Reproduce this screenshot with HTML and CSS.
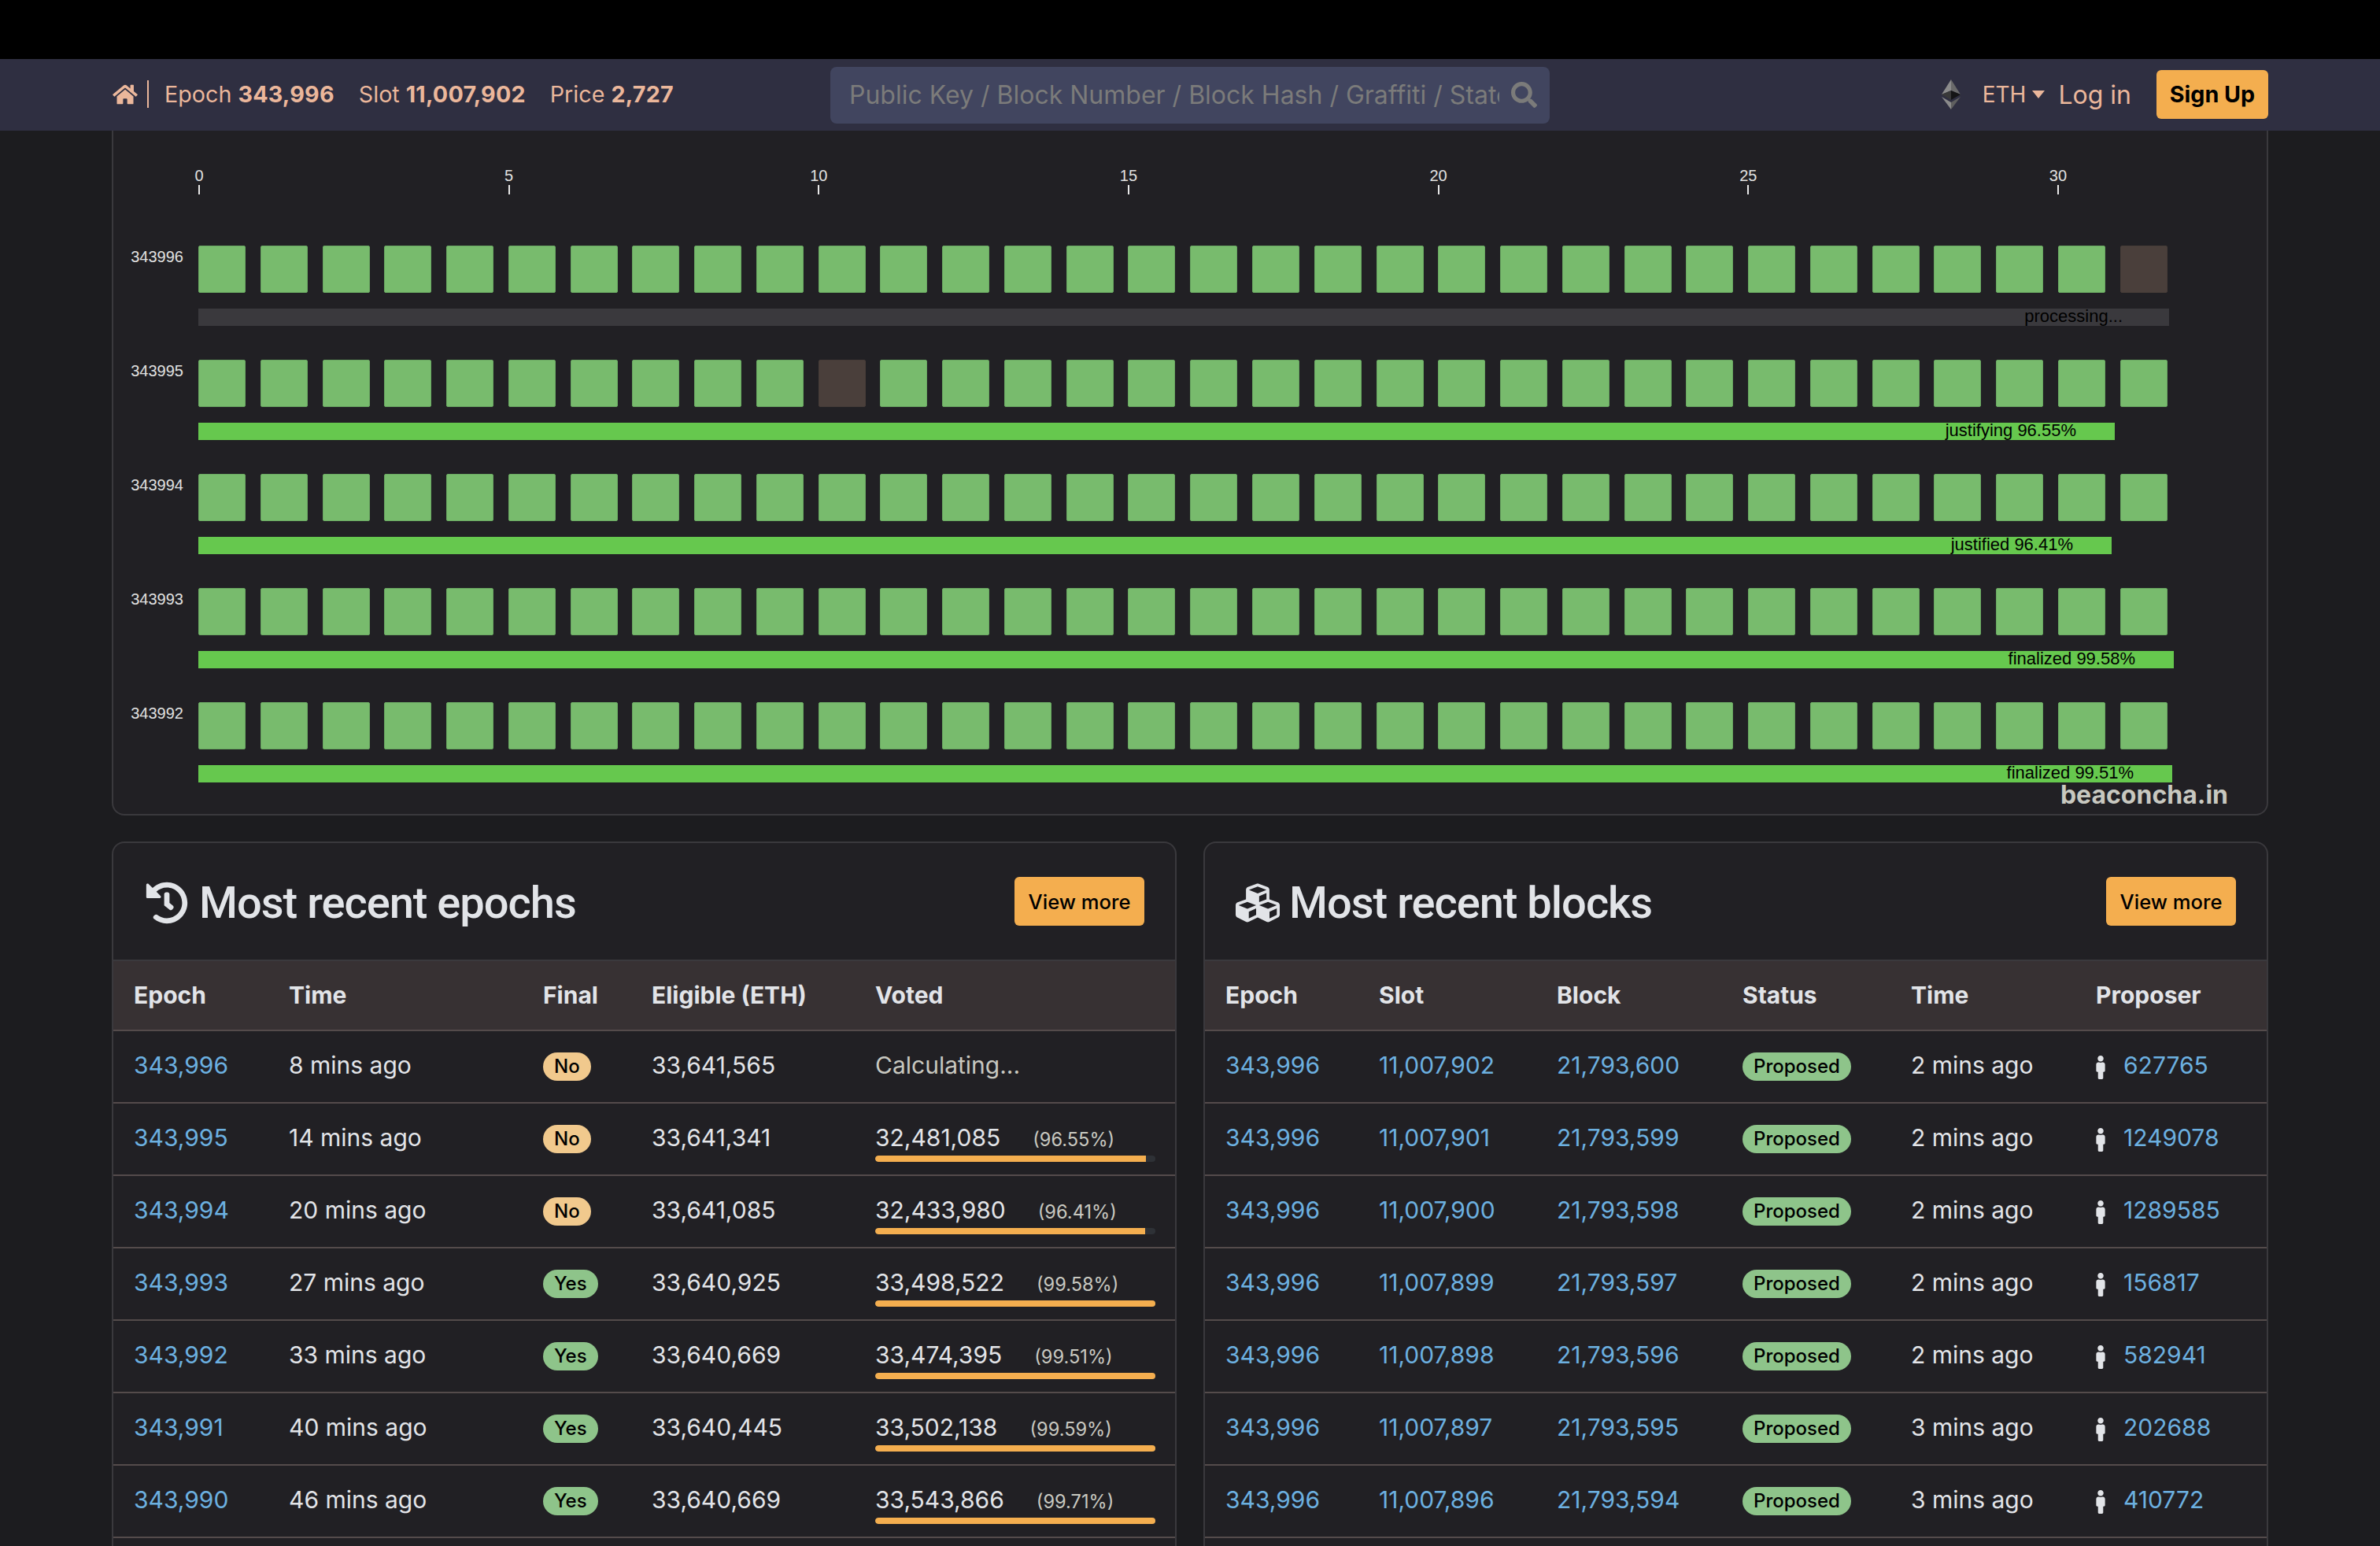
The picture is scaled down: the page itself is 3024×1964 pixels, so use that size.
FILE: index.html
```html
<!DOCTYPE html>
<html lang="en">
<head>
    <meta charset="UTF-8">
    <meta name="viewport" content="width=device-width, initial-scale=1.0">
    <title>Beacon Chain Explorer</title>
    <link rel="stylesheet" href="styles.css">
</head>
<body>

<svg class="defs" width="0" height="0">
    <symbol id="i-male" viewBox="0 0 192 512"><path d="M96 0c35.346 0 64 28.654 64 64s-28.654 64-64 64-64-28.654-64-64S60.654 0 96 0m48 144h-11.36c-22.711 10.443-49.59 10.894-73.28 0H48c-26.51 0-48 21.49-48 48v136c0 13.255 10.745 24 24 24h16v136c0 13.255 10.745 24 24 24h64c13.255 0 24-10.745 24-24V352h16c13.255 0 24-10.745 24-24V192c0-26.51-21.49-48-48-48z"/></symbol>
</svg>

<div class="topband"></div>

<nav class="navbar">
    <div class="nav-left">
        <svg class="home-icon" viewBox="0 0 576 512"><path d="M280.37 148.26L96 300.11V464a16 16 0 0 0 16 16l112.06-.29a16 16 0 0 0 15.92-16V368a16 16 0 0 1 16-16h64a16 16 0 0 1 16 16v95.64a16 16 0 0 0 16 16.05L464 480a16 16 0 0 0 16-16V300L295.67 148.26a12.19 12.19 0 0 0-15.3 0zM571.6 251.47L488 182.56V44.05a12 12 0 0 0-12-12h-56a12 12 0 0 0-12 12v72.61L318.47 43a48 48 0 0 0-61 0L4.34 251.47a12 12 0 0 0-1.6 16.9l25.5 31A12 12 0 0 0 45.15 301l235.22-193.74a12.19 12.19 0 0 1 15.3 0L530.9 301a12 12 0 0 0 16.9-1.6l25.5-31a12 12 0 0 0-1.7-16.93z"/></svg>
        <span class="nav-divider"></span>
        <span class="nav-stat">Epoch <b>343,996</b></span>
        <span class="nav-stat">Slot <b>11,007,902</b></span>
        <span class="nav-stat">Price <b>2,727</b></span>
    </div>
    <form class="search">
        <input class="search-input" type="text" placeholder="Public Key / Block Number / Block Hash / Graffiti / State Root">
        <svg class="search-icon" viewBox="0 0 512 512"><path d="M505 442.7L405.3 343c-4.5-4.5-10.6-7-17-7H372c27.6-35.3 44-79.7 44-128C416 93.1 322.9 0 208 0S0 93.1 0 208s93.1 208 208 208c48.3 0 92.7-16.4 128-44v16.3c0 6.4 2.5 12.5 7 17l99.7 99.7c9.4 9.4 24.6 9.4 33.9 0l28.3-28.3c9.4-9.4 9.4-24.6.1-34zM208 336c-70.7 0-128-57.2-128-128 0-70.7 57.2-128 128-128 70.7 0 128 57.2 128 128 0 70.7-57.2 128-128 128z"/></svg>
    </form>
    <div class="nav-right">
        <svg class="eth-logo" viewBox="0 0 24 38">
            <polygon fill="#8b8b8b" points="12,0 0,19 12,14"/>
            <polygon fill="#6a6a6a" points="12,0 24,19 12,14"/>
            <polygon fill="#393939" points="0,19 12,14 12,26"/>
            <polygon fill="#151515" points="24,19 12,14 12,26"/>
            <polygon fill="#8b8b8b" points="0,22 12,29 12,38"/>
            <polygon fill="#5f5f5f" points="24,22 12,29 12,38"/>
        </svg>
        <span class="currency">ETH<i class="caret"></i></span>
        <a class="login">Log in</a>
        <a class="signup">Sign Up</a>
    </div>
</nav>

<main class="container">

    <section class="card chart-card">
        <div class="ticks">
            <div class="tick"><span>0</span><i></i></div>
            <div class="tick"><span>5</span><i></i></div>
            <div class="tick"><span>10</span><i></i></div>
            <div class="tick"><span>15</span><i></i></div>
            <div class="tick"><span>20</span><i></i></div>
            <div class="tick"><span>25</span><i></i></div>
            <div class="tick"><span>30</span><i></i></div>
        </div>

        <div class="epoch">
            <div class="epoch-label">343996</div>
            <div class="epoch-body">
                <div class="slots">
                    <i class="s"></i><i class="s"></i><i class="s"></i><i class="s"></i><i class="s"></i><i class="s"></i><i class="s"></i><i class="s"></i>
                    <i class="s"></i><i class="s"></i><i class="s"></i><i class="s"></i><i class="s"></i><i class="s"></i><i class="s"></i><i class="s"></i>
                    <i class="s"></i><i class="s"></i><i class="s"></i><i class="s"></i><i class="s"></i><i class="s"></i><i class="s"></i><i class="s"></i>
                    <i class="s"></i><i class="s"></i><i class="s"></i><i class="s"></i><i class="s"></i><i class="s"></i><i class="s"></i><i class="s miss"></i>
                </div>
                <div class="vote-strip processing" style="width: 2504px">processing...</div>
            </div>
        </div>

        <div class="epoch">
            <div class="epoch-label">343995</div>
            <div class="epoch-body">
                <div class="slots">
                    <i class="s"></i><i class="s"></i><i class="s"></i><i class="s"></i><i class="s"></i><i class="s"></i><i class="s"></i><i class="s"></i>
                    <i class="s"></i><i class="s"></i><i class="s miss"></i><i class="s"></i><i class="s"></i><i class="s"></i><i class="s"></i><i class="s"></i>
                    <i class="s"></i><i class="s"></i><i class="s"></i><i class="s"></i><i class="s"></i><i class="s"></i><i class="s"></i><i class="s"></i>
                    <i class="s"></i><i class="s"></i><i class="s"></i><i class="s"></i><i class="s"></i><i class="s"></i><i class="s"></i><i class="s"></i>
                </div>
                <div class="vote-strip" style="width: 2435px">justifying 96.55%</div>
            </div>
        </div>

        <div class="epoch">
            <div class="epoch-label">343994</div>
            <div class="epoch-body">
                <div class="slots">
                    <i class="s"></i><i class="s"></i><i class="s"></i><i class="s"></i><i class="s"></i><i class="s"></i><i class="s"></i><i class="s"></i>
                    <i class="s"></i><i class="s"></i><i class="s"></i><i class="s"></i><i class="s"></i><i class="s"></i><i class="s"></i><i class="s"></i>
                    <i class="s"></i><i class="s"></i><i class="s"></i><i class="s"></i><i class="s"></i><i class="s"></i><i class="s"></i><i class="s"></i>
                    <i class="s"></i><i class="s"></i><i class="s"></i><i class="s"></i><i class="s"></i><i class="s"></i><i class="s"></i><i class="s"></i>
                </div>
                <div class="vote-strip" style="width: 2431px">justified 96.41%</div>
            </div>
        </div>

        <div class="epoch">
            <div class="epoch-label">343993</div>
            <div class="epoch-body">
                <div class="slots">
                    <i class="s"></i><i class="s"></i><i class="s"></i><i class="s"></i><i class="s"></i><i class="s"></i><i class="s"></i><i class="s"></i>
                    <i class="s"></i><i class="s"></i><i class="s"></i><i class="s"></i><i class="s"></i><i class="s"></i><i class="s"></i><i class="s"></i>
                    <i class="s"></i><i class="s"></i><i class="s"></i><i class="s"></i><i class="s"></i><i class="s"></i><i class="s"></i><i class="s"></i>
                    <i class="s"></i><i class="s"></i><i class="s"></i><i class="s"></i><i class="s"></i><i class="s"></i><i class="s"></i><i class="s"></i>
                </div>
                <div class="vote-strip" style="width: 2510px">finalized 99.58%</div>
            </div>
        </div>

        <div class="epoch">
            <div class="epoch-label">343992</div>
            <div class="epoch-body">
                <div class="slots">
                    <i class="s"></i><i class="s"></i><i class="s"></i><i class="s"></i><i class="s"></i><i class="s"></i><i class="s"></i><i class="s"></i>
                    <i class="s"></i><i class="s"></i><i class="s"></i><i class="s"></i><i class="s"></i><i class="s"></i><i class="s"></i><i class="s"></i>
                    <i class="s"></i><i class="s"></i><i class="s"></i><i class="s"></i><i class="s"></i><i class="s"></i><i class="s"></i><i class="s"></i>
                    <i class="s"></i><i class="s"></i><i class="s"></i><i class="s"></i><i class="s"></i><i class="s"></i><i class="s"></i><i class="s"></i>
                </div>
                <div class="vote-strip" style="width: 2508px">finalized 99.51%</div>
            </div>
        </div>

        <div class="watermark">beaconcha.in</div>
    </section>

    <div class="tables">

        <section class="card">
            <header class="card-head">
                <h2 class="card-title">
                    <svg class="title-icon" viewBox="0 0 512 512"><path d="M504 255.531c.253 136.64-111.18 248.372-247.82 248.468-59.015.042-113.223-20.53-155.822-54.911-11.077-8.94-11.905-25.541-1.839-35.607l11.267-11.267c8.609-8.609 22.353-9.551 31.891-1.984C173.062 425.135 212.781 440 256 440c101.705 0 184-82.311 184-184 0-101.705-82.311-184-184-184-48.814 0-93.149 18.969-126.068 49.932l50.754 50.754c10.08 10.08 2.941 27.314-11.313 27.314H24c-8.837 0-16-7.163-16-16V38.627c0-14.254 17.234-21.393 27.314-11.314l49.372 49.372C129.209 34.136 189.552 8 256 8c136.81 0 247.747 110.78 248 247.531zm-180.912 78.784l9.823-12.63c8.138-10.463 6.253-25.542-4.21-33.679L288 256.349V152c0-13.255-10.745-24-24-24h-16c-13.255 0-24 10.745-24 24v135.651l65.409 50.874c10.463 8.137 25.541 6.253 33.679-4.21z"/></svg>
                    Most recent epochs
                </h2>
                <a class="btn-more">View more</a>
            </header>
            <table class="data epochs">
                <thead>
                    <tr><th>Epoch</th><th>Time</th><th>Final</th><th>Eligible (ETH)</th><th>Voted</th></tr>
                </thead>
                <tbody>
                    <tr>
                        <td><a>343,996</a></td><td>8 mins ago</td><td><span class="badge no">No</span></td><td>33,641,565</td>
                        <td class="muted">Calculating...</td>
                    </tr>
                    <tr>
                        <td><a>343,995</a></td><td>14 mins ago</td><td><span class="badge no">No</span></td><td>33,641,341</td>
                        <td><div class="voted">32,481,085<small>(96.55%)</small></div><div class="progress"><div style="width: 96.55%"></div></div></td>
                    </tr>
                    <tr>
                        <td><a>343,994</a></td><td>20 mins ago</td><td><span class="badge no">No</span></td><td>33,641,085</td>
                        <td><div class="voted">32,433,980<small>(96.41%)</small></div><div class="progress"><div style="width: 96.41%"></div></div></td>
                    </tr>
                    <tr>
                        <td><a>343,993</a></td><td>27 mins ago</td><td><span class="badge yes">Yes</span></td><td>33,640,925</td>
                        <td><div class="voted">33,498,522<small>(99.58%)</small></div><div class="progress"><div style="width: 100%"></div></div></td>
                    </tr>
                    <tr>
                        <td><a>343,992</a></td><td>33 mins ago</td><td><span class="badge yes">Yes</span></td><td>33,640,669</td>
                        <td><div class="voted">33,474,395<small>(99.51%)</small></div><div class="progress"><div style="width: 100%"></div></div></td>
                    </tr>
                    <tr>
                        <td><a>343,991</a></td><td>40 mins ago</td><td><span class="badge yes">Yes</span></td><td>33,640,445</td>
                        <td><div class="voted">33,502,138<small>(99.59%)</small></div><div class="progress"><div style="width: 100%"></div></div></td>
                    </tr>
                    <tr>
                        <td><a>343,990</a></td><td>46 mins ago</td><td><span class="badge yes">Yes</span></td><td>33,640,669</td>
                        <td><div class="voted">33,543,866<small>(99.71%)</small></div><div class="progress"><div style="width: 100%"></div></div></td>
                    </tr>
                </tbody>
            </table>
        </section>

        <section class="card">
            <header class="card-head">
                <h2 class="card-title">
                    <svg class="title-icon cubes" viewBox="0 0 512 512"><path d="M488.6 250.2L392 214V105.5c0-15-9.3-28.4-23.4-33.7l-100-37.5c-8.1-3.1-17.1-3.1-25.3 0l-100 37.5c-14.1 5.3-23.4 18.7-23.4 33.7V214l-96.6 36.2C9.3 255.5 0 268.9 0 283.9V394c0 13.6 7.7 26.1 19.9 32.2l100 50c10.1 5.1 22.1 5.1 32.2 0l103.9-52 103.9 52c10.1 5.1 22.1 5.1 32.2 0l100-50c12.2-6.1 19.9-18.6 19.9-32.2V283.9c0-15-9.3-28.4-23.4-33.7zM358 214.8l-85 31.9v-68.2l85-37v73.3zM154 104.1l102-38.2 102 38.2v.6l-102 41.4-102-41.4v-.6zm84 291.1l-85 42.5v-79.1l85-38.8v75.4zm0-112l-102 41.4-102-41.4v-.6l102-38.2 102 38.2v.6zm240 112l-85 42.5v-79.1l85-38.8v75.4zm0-112l-102 41.4-102-41.4v-.6l102-38.2 102 38.2v.6z"/></svg>
                    Most recent blocks
                </h2>
                <a class="btn-more">View more</a>
            </header>
            <table class="data blocks">
                <thead>
                    <tr><th>Epoch</th><th>Slot</th><th>Block</th><th>Status</th><th>Time</th><th>Proposer</th></tr>
                </thead>
                <tbody>
                    <tr><td><a>343,996</a></td><td><a>11,007,902</a></td><td><a>21,793,600</a></td><td><span class="badge yes">Proposed</span></td><td>2 mins ago</td><td><svg class="male"><use href="#i-male"/></svg><a>627765</a></td></tr>
                    <tr><td><a>343,996</a></td><td><a>11,007,901</a></td><td><a>21,793,599</a></td><td><span class="badge yes">Proposed</span></td><td>2 mins ago</td><td><svg class="male"><use href="#i-male"/></svg><a>1249078</a></td></tr>
                    <tr><td><a>343,996</a></td><td><a>11,007,900</a></td><td><a>21,793,598</a></td><td><span class="badge yes">Proposed</span></td><td>2 mins ago</td><td><svg class="male"><use href="#i-male"/></svg><a>1289585</a></td></tr>
                    <tr><td><a>343,996</a></td><td><a>11,007,899</a></td><td><a>21,793,597</a></td><td><span class="badge yes">Proposed</span></td><td>2 mins ago</td><td><svg class="male"><use href="#i-male"/></svg><a>156817</a></td></tr>
                    <tr><td><a>343,996</a></td><td><a>11,007,898</a></td><td><a>21,793,596</a></td><td><span class="badge yes">Proposed</span></td><td>2 mins ago</td><td><svg class="male"><use href="#i-male"/></svg><a>582941</a></td></tr>
                    <tr><td><a>343,996</a></td><td><a>11,007,897</a></td><td><a>21,793,595</a></td><td><span class="badge yes">Proposed</span></td><td>3 mins ago</td><td><svg class="male"><use href="#i-male"/></svg><a>202688</a></td></tr>
                    <tr><td><a>343,996</a></td><td><a>11,007,896</a></td><td><a>21,793,594</a></td><td><span class="badge yes">Proposed</span></td><td>3 mins ago</td><td><svg class="male"><use href="#i-male"/></svg><a>410772</a></td></tr>
                </tbody>
            </table>
        </section>

    </div>
</main>

</body>
</html>
```

FILE: styles.css
```css
html, body {
    height: 1964px;
    overflow: hidden;
}

body {
    margin: 0;
    background-color: #1c1c1f;
    color: #e2e4e8;
    font-family: Inter, "Liberation Sans", sans-serif;
    font-size: 30px;
}

.defs {
    position: absolute;
}

.topband {
    height: 75px;
    background-color: #000;
}

/* Navbar */
.navbar {
    display: flex;
    align-items: center;
    height: 91px;
    padding: 0 142px 0 143px;
    background-color: #2f2f41;
    color: #ebb79b;
}

.nav-left {
    display: flex;
    flex-shrink: 0;
    align-items: center;
    width: 912px;
    margin-bottom: 2px;
    font-size: 28.7px;
}

.home-icon {
    width: 32px;
    height: 28px;
    fill: #ebb79b;
}

.nav-divider {
    width: 2px;
    height: 35px;
    margin: 0 20px 0 12px;
    background-color: #ebb79b;
}

.nav-stat {
    margin-right: 31px;
    white-space: nowrap;
}

.nav-stat b {
    font-weight: 700;
    letter-spacing: 0.2px;
}

.search {
    display: flex;
    align-items: center;
    width: 914px;
    height: 72px;
    padding: 0 16px 0 24px;
    box-sizing: border-box;
    border-radius: 8px;
    background-color: #41455f;
}

.search-input {
    flex: 1;
    min-width: 0;
    padding: 0;
    border: 0;
    outline: 0;
    background: transparent;
    color: #e2e4e8;
    font-family: inherit;
    font-size: 32px;
}

.search-input::placeholder {
    color: #7b7b7a;
    opacity: 1;
}

.search-icon {
    width: 33px;
    height: 33px;
    margin-left: 15px;
    fill: #7b7b7a;
}

.nav-right {
    display: flex;
    align-items: center;
    margin-left: auto;
    margin-bottom: 1px;
}

.eth-logo {
    width: 24px;
    height: 38px;
    margin-right: 28px;
}

.currency {
    display: flex;
    align-items: center;
    font-size: 28px;
}

.caret {
    width: 0;
    height: 0;
    margin-left: 8px;
    border-top: 10px solid #ebb79b;
    border-left: 8px solid transparent;
    border-right: 8px solid transparent;
}

.login {
    margin: 0 32px 0 17px;
    font-size: 32px;
}

.signup {
    width: 142px;
    height: 62px;
    border-radius: 6px;
    background-color: #f4ae4f;
    color: #000;
    font-size: 28.7px;
    font-weight: 700;
    line-height: 62px;
    text-align: center;
}

/* Page */
.container {
    width: 2740px;
    margin: 0 auto;
}

.card {
    position: relative;
    border: 2px solid #3a393d;
    border-radius: 16px;
    background-color: #212024;
    overflow: hidden;
}

/* Epoch chart */
.chart-card {
    height: 870px;
    box-sizing: border-box;
    padding: 45px 0 0 108px;
    border-top: 0;
    border-radius: 0 0 16px 16px;
    font-family: "Liberation Sans", sans-serif;
    font-size: 20px;
}

.ticks {
    display: flex;
    justify-content: space-between;
    width: 2364px;
    height: 101px;
}

.tick {
    display: flex;
    flex-direction: column;
    align-items: center;
    width: 2px;
    color: #e0e0e0;
}

.tick span {
    height: 24px;
    line-height: 24px;
}

.tick i {
    width: 2px;
    height: 12px;
    background-color: #e8e8e8;
}

.epoch {
    display: flex;
    margin-bottom: 43px;
}

.epoch-label {
    width: 89px;
    margin-left: -108px;
    padding-top: 3px;
    margin-right: 19px;
    color: #e0e0e0;
    text-align: right;
}

.epoch-body {
    width: 2502px;
}

.slots {
    display: flex;
    justify-content: space-between;
    margin-bottom: 20px;
}

.s {
    width: 60px;
    height: 60px;
    box-sizing: border-box;
    border: 1px solid #6aa862;
    border-radius: 2px;
    background-color: #78bb6d;
}

.s.miss {
    border-color: #463c38;
    background-color: #4a3f3b;
}

.vote-strip {
    height: 22px;
    padding-right: 49px;
    box-sizing: border-box;
    background-color: #66c84e;
    color: #000;
    font-size: 22px;
    line-height: 20px;
    text-align: right;
}

.vote-strip.processing {
    padding-right: 59px;
    background-color: #3a393d;
}

.watermark {
    position: absolute;
    right: 49px;
    bottom: 5px;
    color: #c8c8c0;
    font-family: Inter, sans-serif;
    font-size: 32px;
    font-weight: 700;
}

/* Tables */
.tables {
    display: grid;
    grid-template-columns: 1353px 1353px;
    gap: 34px;
    margin-top: 33px;
}

/* cards run on below the window, so no bottom edge shows */
.tables .card {
    height: 895px;
    box-sizing: border-box;
    border-bottom: 0;
    border-radius: 16px 16px 0 0;
}

.card-head {
    display: flex;
    align-items: center;
    justify-content: space-between;
    height: 148px;
    padding: 0 39px 0 41px;
}

.card-title {
    display: flex;
    align-items: center;
    margin: 4px 0 0;
    color: #e2e4e8;
    font-family: Roboto, sans-serif;
    font-size: 56px;
    font-weight: 500;
    letter-spacing: -1px;
}

.title-icon {
    width: 54px;
    height: 54px;
    margin-right: 14px;
    fill: #e2e4e8;
}

.title-icon.cubes {
    width: 56px;
    height: 56px;
    margin-left: -2px;
    margin-right: 12px;
}

.btn-more {
    width: 165px;
    height: 62px;
    border-radius: 6px;
    background-color: #f4ae4f;
    color: #000;
    font-size: 25.6px;
    font-weight: 500;
    line-height: 64px;
    text-align: center;
}

.data {
    width: 100%;
    border-collapse: collapse;
    table-layout: fixed;
}

.data th {
    height: 89px;
    padding: 0 0 2px 26px;
    box-sizing: border-box;
    border-top: 2px solid #3a393d;
    border-bottom: 2px solid #544b4b;
    background-color: #373133;
    font-weight: 700;
    text-align: left;
}

.data td {
    height: 92px;
    padding: 0 25px 4px 26px;
    box-sizing: border-box;
    border-bottom: 2px solid #544b4b;
    white-space: nowrap;
}

.data a {
    color: #6cb0e0;
}

.epochs th:nth-child(1) { width: 197px; }
.epochs th:nth-child(2) { width: 323px; }
.epochs th:nth-child(3) { width: 138px; }
.epochs th:nth-child(4) { width: 284px; }

.blocks th:nth-child(1) { width: 195px; }
.blocks th:nth-child(2) { width: 226px; }
.blocks th:nth-child(3) { width: 236px; }
.blocks th:nth-child(4) { width: 214px; }
.blocks th:nth-child(5) { width: 235px; }

.badge {
    display: inline-block;
    height: 36px;
    margin-top: 4px;
    padding: 0 14px;
    border-radius: 18px;
    color: #000;
    font-size: 24px;
    font-weight: 500;
    line-height: 36px;
    vertical-align: middle;
}

.badge.no { background-color: #f1c98d; }
.badge.yes { background-color: #8ec48a; }

.muted {
    color: #c8c8c0;
}

.voted {
    margin-top: 2px;
    line-height: 40px;
}

.voted small {
    margin-left: 41px;
    color: #c8c8c0;
    font-size: 23.6px;
}

.progress {
    height: 8px;
    margin: 0 0 -8px;
    border-radius: 4px;
    background-color: #2e3136;
    overflow: hidden;
}

.progress div {
    height: 100%;
    border-radius: 4px 0 0 4px;
    background-color: #f4ae4f;
}

.male {
    width: 12px;
    height: 30px;
    margin-right: 23px;
    fill: #e2e4e8;
    vertical-align: middle;
}
```
